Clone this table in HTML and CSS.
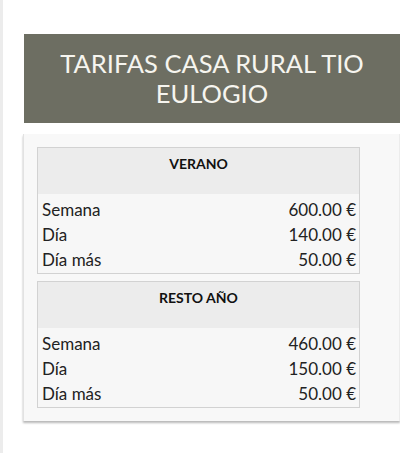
FILE: index.html
```html
<!DOCTYPE html>
<html lang="es">
<head>
<meta charset="utf-8">
<title>Tarifas Casa Rural Tio Eulogio</title>
<link rel="stylesheet" href="styles.css">
</head>
<body>
<div class="page">
  <h1 class="title">TARIFAS CASA RURAL TIO EULOGIO</h1>
  <div class="card">
    <table class="rates">
      <thead><tr><th colspan="2">VERANO</th></tr></thead>
      <tbody>
        <tr><td>Semana</td><td class="price">600.00 €</td></tr>
        <tr><td>Día</td><td class="price">140.00 €</td></tr>
        <tr><td>Día más</td><td class="price">50.00 €</td></tr>
      </tbody>
    </table>
    <table class="rates">
      <thead><tr><th colspan="2">RESTO AÑO</th></tr></thead>
      <tbody>
        <tr><td>Semana</td><td class="price">460.00 €</td></tr>
        <tr><td>Día</td><td class="price">150.00 €</td></tr>
        <tr><td>Día más</td><td class="price">50.00 €</td></tr>
      </tbody>
    </table>
  </div>
</div>
</body>
</html>
```
FILE: styles.css
```css
html, body {
  margin: 0;
  padding: 0;
  background: #ffffff;
}
body {
  font-family: Lato, "Open Sans", sans-serif;
  color: #222;
  width: 400px;
  height: 453px;
  overflow: hidden;
  border-left: 3px solid #ececec;
  box-sizing: border-box;
}
.page {
  padding: 34px 0 0 21px;
}
.title {
  margin: 0;
  background: #6d6e62;
  color: #f6f5ef;
  font-weight: 400;
  font-size: 25.5px;
  line-height: 30px;
  text-align: center;
  padding: 14px 0 15px;
  height: 89px;
  box-sizing: border-box;
}
.card {
  margin-top: 11px;
  margin-left: -1px;
  background: #f8f8f8;
  border-left: 1px solid #e2e2e2;
  border-right: 1px solid #ececec;
  box-shadow: 0 2px 2px rgba(0, 0, 0, 0.28);
  padding: 13px 39px 13px 13px;
  display: flex;
  flex-direction: column;
  gap: 7px;
}
.rates {
  width: 100%;
  border-collapse: collapse;
  border: 1px solid #d2d2d2;
  background: #f7f7f7;
}
.rates th {
  background: #ececec;
  font-weight: 700;
  font-size: 14px;
  line-height: 17px;
  height: 46px;
  box-sizing: border-box;
  padding: 7px 0 22px;
  text-align: center;
  vertical-align: top;
  color: #111;
}
.rates td {
  font-size: 17px;
  line-height: 25px;
  padding: 0 3px 0 4px;
}
.rates tbody tr:first-child td {
  padding-top: 3px;
}
.rates tbody tr:last-child td {
  padding-bottom: 1px;
}
.rates .price {
  text-align: right;
}
```
